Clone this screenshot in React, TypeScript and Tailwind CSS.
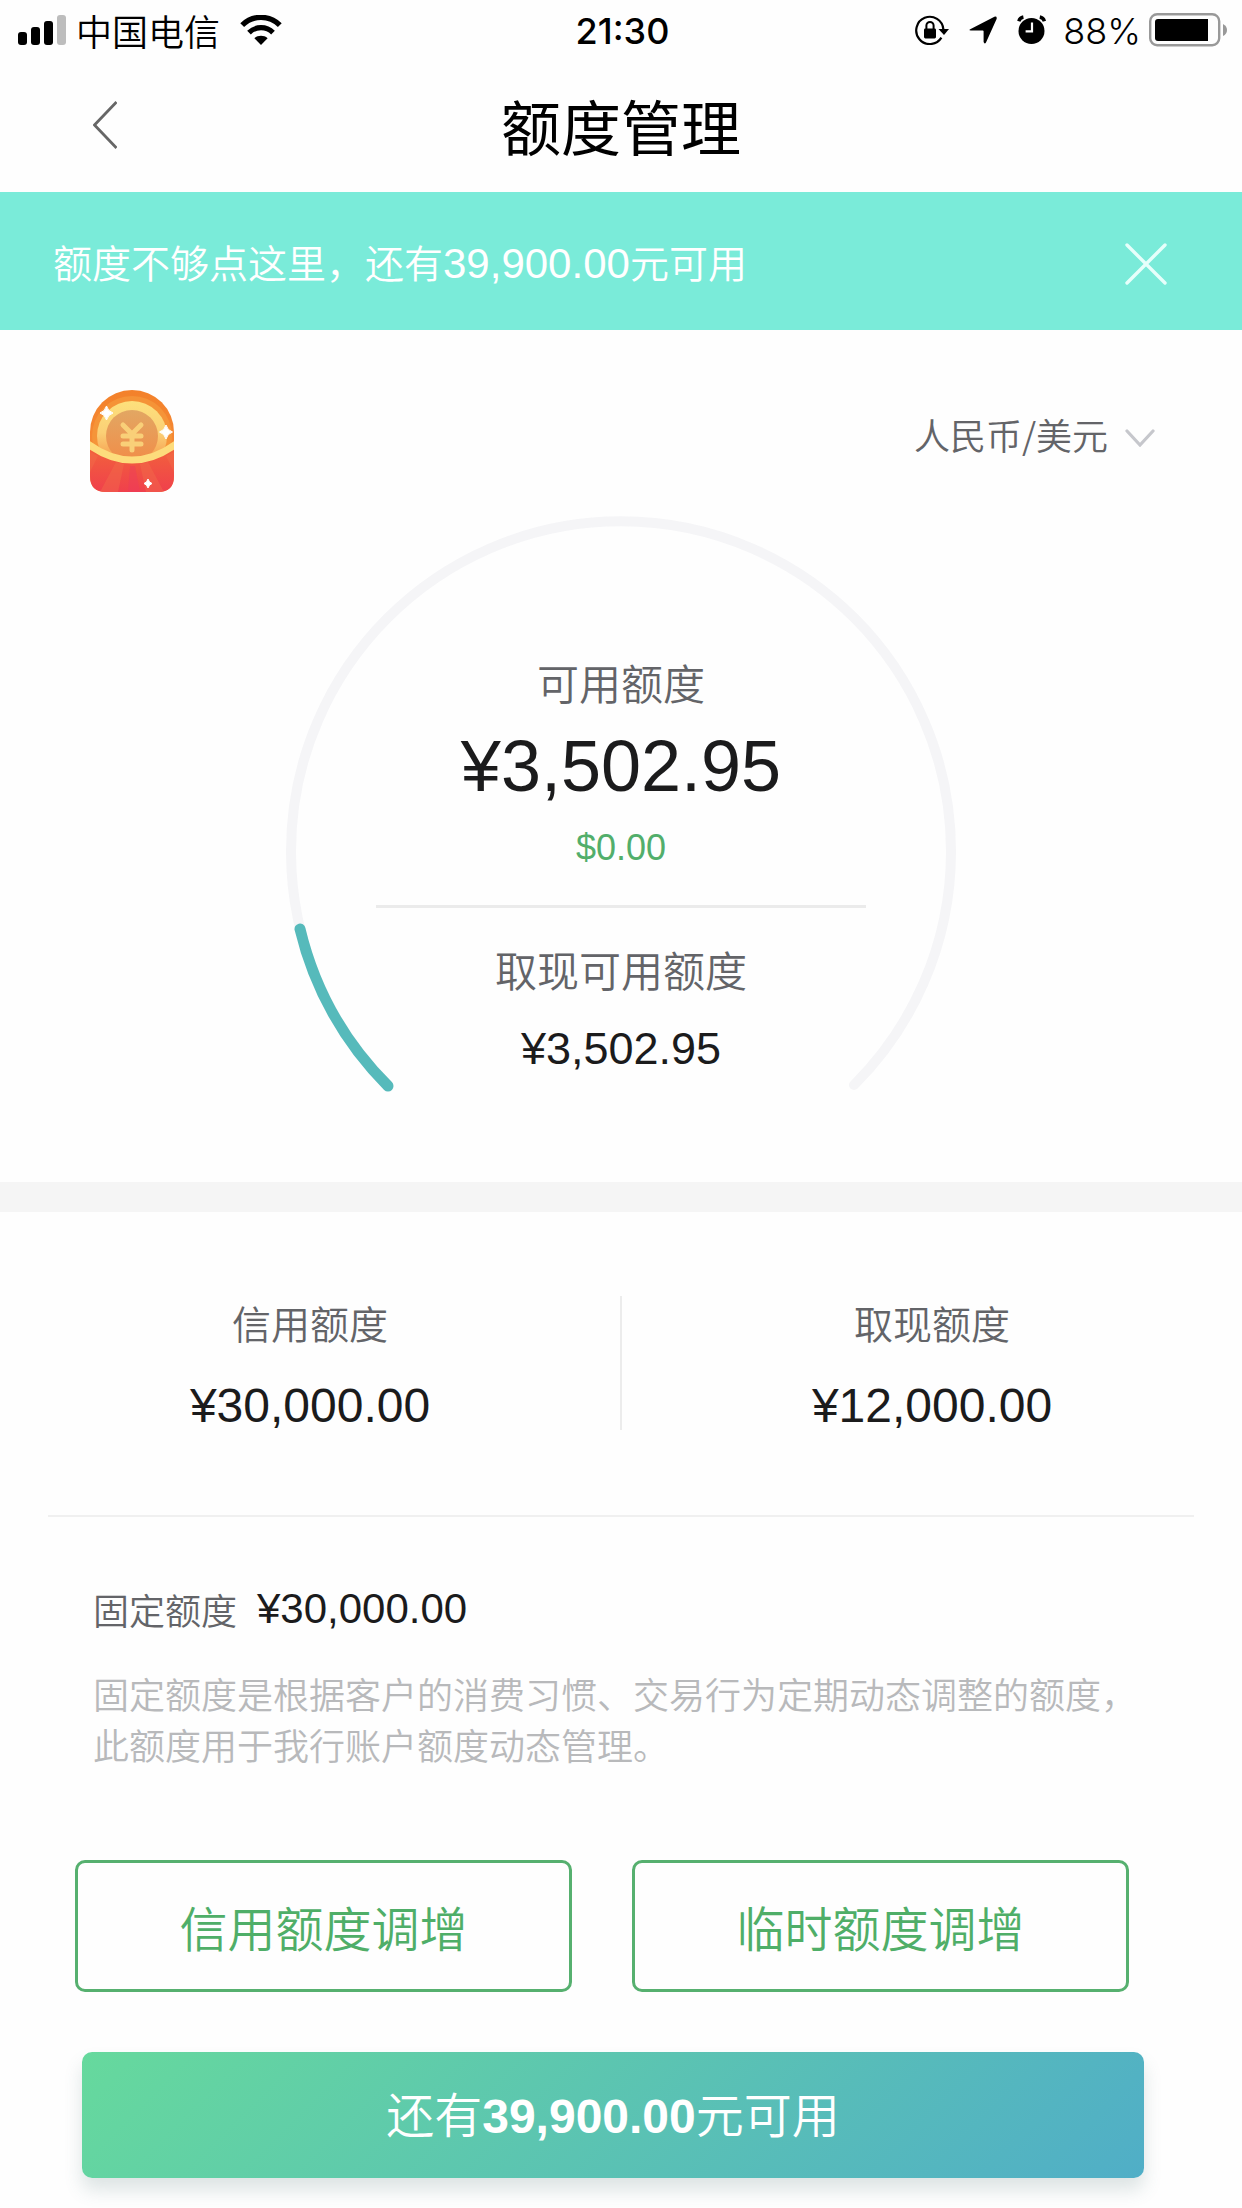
import React from "react";

function SignalIcon() {
  return (
    <svg width="48" height="30" viewBox="0 0 48 30" aria-hidden="true">
      <rect x="0" y="17" width="9" height="13" rx="3" fill="#000" />
      <rect x="13" y="12" width="9" height="18" rx="3" fill="#000" />
      <rect x="26" y="6" width="9" height="24" rx="3" fill="#000" />
      <rect x="39" y="0" width="9" height="30" rx="3" fill="#bdbdbd" />
    </svg>
  );
}

function WifiIcon() {
  return (
    <svg width="42" height="30" viewBox="0 0 42 30" fill="none" aria-hidden="true">
      <path d="M2.2 10.2C12.6 -0.2 29.4 -0.2 39.8 10.2" stroke="#000" strokeWidth="5.4" />
      <path d="M9 17.6C15.6 11 26.4 11 33 17.6" stroke="#000" strokeWidth="5.2" />
      <path d="M14.4 23.2C18 20 24 20 27.6 23.2L21 30Z" fill="#000" />
    </svg>
  );
}

function RotationLockIcon() {
  return (
    <svg width="34" height="30" viewBox="0 0 34 30" fill="none" aria-hidden="true">
      <path d="M26.4 22.6A13.6 13.6 0 1 1 28.4 14.5" stroke="#000" strokeWidth="2.2" />
      <path d="M23.500 14H34L29 20Z" fill="#000" />
      <rect x="9" y="13.4" width="12" height="10" rx="1.4" fill="#000" />
      <path d="M11.4 14V10.6a3.6 3.6 0 0 1 7.2 0V14" stroke="#000" strokeWidth="2" />
    </svg>
  );
}

function LocationIcon() {
  return (
    <svg width="28" height="28" viewBox="0 0 28 28" aria-hidden="true">
      <path
        d="M1.2 13.2L25.4 0.7Q28.3 0 27.6 3L17 26.4Q15.6 28.6 14.6 26V15.2Q14.5 14.6 13.8 14.6H1.8Q-0.8 14.4 1.2 13.2Z"
        fill="#000"
      />
    </svg>
  );
}

function AlarmIcon() {
  return (
    <svg width="30" height="30" viewBox="0 0 30 30" fill="none" aria-hidden="true">
      <circle cx="14.5" cy="16" r="13" fill="#000" />
      <path d="M1.8 6.2A6 6 0 0 1 6.4 2M22.8 2A6 6 0 0 1 27.4 6.2" stroke="#000" strokeWidth="3.4" />
      <path d="M15 7.4V16.4H8.6" stroke="#fff" strokeWidth="2.2" />
    </svg>
  );
}

function BatteryIcon() {
  return (
    <svg width="78" height="34" viewBox="0 0 78 34" aria-hidden="true">
      <rect x="1.2" y="1.2" width="69" height="31" rx="7" fill="none" stroke="#999" strokeWidth="2.4" />
      <path d="M74 11Q78 13 78 17T74 23Z" fill="#999" />
      <path d="M9 6H59V28H9Q6 28 6 25V9Q6 6 9 6Z" fill="#000" />
    </svg>
  );
}

function CoinIcon() {
  return (
    <svg width="84" height="102" viewBox="0 0 84 102" aria-hidden="true">
      <defs>
        <clipPath id="pouch">
          <path d="M0 42A42 42 0 0 1 84 42V86Q84 102 68 102H16Q0 102 0 86Z" />
        </clipPath>
        <linearGradient id="top" x1="0" y1="0" x2="0" y2="1">
          <stop offset="0" stopColor="#f3812a" />
          <stop offset="1" stopColor="#f7903f" />
        </linearGradient>
        <linearGradient id="coin" x1="0" y1="0" x2="0" y2="1">
          <stop offset="0" stopColor="#e2a763" />
          <stop offset="1" stopColor="#f18d48" />
        </linearGradient>
        <linearGradient id="ring" x1="0" y1="0" x2="0" y2="1">
          <stop offset="0" stopColor="#fde07c" />
          <stop offset="0.45" stopColor="#fbd076" />
          <stop offset="0.85" stopColor="#f59a4c" />
        </linearGradient>
        <linearGradient id="pocket" x1="0" y1="0" x2="0" y2="1">
          <stop offset="0" stopColor="#f2653a" />
          <stop offset="1" stopColor="#f0404c" />
        </linearGradient>
      </defs>
      <g clipPath="url(#pouch)">
        <rect width="84" height="102" fill="url(#top)" />
        <circle cx="42" cy="46" r="40" fill="#f59a3c" opacity="0.7" />
        <circle cx="42" cy="46" r="35" fill="url(#ring)" />
        <circle cx="42" cy="46" r="26" fill="url(#coin)" />
        <path
          d="M33 35L42 44L51 35M33 46H51M33 54H51M42 45V60"
          stroke="#f9cf78"
          strokeWidth="5"
          strokeLinecap="round"
          strokeLinejoin="round"
          fill="none"
        />
        <path d="M0 54Q42 86 84 54V102H0Z" fill="url(#pocket)" />
        <path d="M26 72L34 74L28 102H10ZM50 74L58 72L74 102H56Z" fill="#f3704a" opacity="0.4" />
        <path d="M0 62L8 66L0 82ZM84 62L76 66L84 82Z" fill="#f3704a" opacity="0.4" />
        <path d="M38 102L40 76H45L50 102Z" fill="#ee3a60" opacity="0.4" />
        <path d="M-2 54Q42 86 86 54" stroke="#fddc7c" strokeWidth="7" fill="none" />
      </g>
      <g fill="#fff" stroke="#fff">
        <path d="M16.500 16Q18 21.500 23 23Q18 24.500 16.500 30Q15 24.500 10 23Q15 21.500 16.500 16Z" />
        <path d="M76 35Q77.500 40.500 82.500 42Q77.500 43.500 76 49Q74.500 43.500 69.500 42Q74.500 40.500 76 35Z" />
        <path d="M58 89Q59 92.500 62 93.500Q59 94.500 58 98Q57 94.500 54 93.500Q57 92.500 58 89Z" />
      </g>
    </svg>
  );
}

function StatusBar() {
  return (
    <div className="grid h-[60px] grid-cols-[1fr_auto_1fr] items-center pr-[15px] pl-[18px] text-black">
      <div className="flex items-center">
        <SignalIcon />
        <span className="mr-5 ml-2.5 font-['Noto_Sans_CJK_SC',sans-serif] text-[36px] leading-[48px]">
          中国电信
        </span>
        <WifiIcon />
      </div>
      <time className="pt-0.5 font-['Inter',sans-serif] text-[36px] leading-[48px] font-medium">21:30</time>
      <div className="flex items-center justify-end">
        <RotationLockIcon />
        <span className="mr-5 ml-5">
          <LocationIcon />
        </span>
        <AlarmIcon />
        <span className="mr-2 ml-4 pt-0.5 font-['Inter',sans-serif] text-[36px] leading-[48px] font-light">
          88%
        </span>
        <BatteryIcon />
      </div>
    </div>
  );
}

function Gauge() {
  return (
    <div className="mt-6 grid justify-items-center">
      <svg
        className="col-start-1 row-start-1"
        width="670"
        height="600"
        viewBox="0 0 670 600"
        fill="none"
        strokeLinecap="round"
        aria-hidden="true"
      >
        <path d="M102 569A330 330 0 1 1 568 569" stroke="#f5f5f7" strokeWidth="10" />
        <path d="M102 570A330 330 0 0 1 14 413" stroke="#56babb" strokeWidth="11" />
      </svg>
      <div className="col-start-1 row-start-1 flex w-[490px] flex-col items-center pt-[140px]">
        <h2 className="text-[42px] leading-[60px] text-[#636468]">可用额度</h2>
        <p className="mt-2 text-[72px] leading-[84px] text-[#1b1b1c]">¥3,502.95</p>
        <p className="mt-4 text-[36px] leading-[48px] text-[#52ae6b]">$0.00</p>
        <hr className="mt-[33px] w-full border-t-3 border-[#ebebeb]" />
        <h2 className="mt-[35px] text-[42px] leading-[60px] text-[#636468]">取现可用额度</h2>
        <p className="mt-4 text-[45px] leading-[60px] text-[#1b1b1c]">¥3,502.95</p>
      </div>
    </div>
  );
}

function Limit({ label, amount }: { label: string; amount: string }) {
  return (
    <div className="flex flex-1 flex-col items-center gap-7 pt-0.5">
      <dt className="text-[39px] leading-[56px] text-[#636468]">{label}</dt>
      <dd className="text-[48px] leading-[48px] text-[#1b1b1c]">{amount}</dd>
    </div>
  );
}

function OutlineButton({ children }: { children: React.ReactNode }) {
  return (
    <button
      type="button"
      className="h-[132px] flex-1 rounded-[10px] border-3 border-[#56b06f] font-['Noto_Sans_CJK_SC',sans-serif] text-[48px] leading-[60px] text-[#4fae68]"
    >
      {children}
    </button>
  );
}

export default function App() {
  return (
    <div className="min-h-screen bg-[#fefefe] pb-[30px] font-['Liberation_Sans','Noto_Sans_CJK_SC',sans-serif] font-[350]">
      <StatusBar />
      <header className="grid h-[130px] grid-cols-[1fr_auto_1fr] items-center px-[93px]">
        <button type="button" aria-label="返回" className="justify-self-start">
          <svg width="24" height="48" viewBox="0 0 24 48" fill="none" aria-hidden="true">
            <path d="M23.500 1L1.500 24L23.500 47" stroke="#666" strokeWidth="2.800" />
          </svg>
        </button>
        <h1 className="font-['Noto_Sans_CJK_SC',sans-serif] text-[60px] leading-[72px] font-normal text-black">
          额度管理
        </h1>
      </header>

      <div className="mt-0.5 flex h-[138px] items-center justify-between bg-[#7aebd9] pt-1.5 pr-[75px] pl-[53px] text-white">
        <a href="#increase" className="text-[39px] leading-[54px]">
          额度不够点这里，还有<span className="text-[42px]">39,900.00</span>元可用
        </a>
        <button type="button" aria-label="关闭">
          <svg width="42" height="42" viewBox="0 0 42 42" fill="none" aria-hidden="true">
            <path d="M2 2L40 40M40 2L2 40" stroke="#e6fffb" strokeWidth="3.400" strokeLinecap="round" />
          </svg>
        </button>
      </div>

      <main>
        <section className="pt-[60px] pb-[66px]">
          <div className="flex justify-between pr-[87px] pl-[90px]">
            <CoinIcon />
            <label className="flex items-center gap-4 self-start pt-5">
              <select
                aria-label="币种"
                className="appearance-none bg-transparent font-['Noto_Sans_CJK_SC',sans-serif] text-[36px] leading-[48px] text-[#636468]"
              >
                <option>人民币/美元</option>
              </select>
              <svg className="mt-2" width="30" height="18" viewBox="0 0 30 18" fill="none" aria-hidden="true">
                <path d="M2 2L15 16L28 2" stroke="#c6c7cc" strokeWidth="3.200" strokeLinecap="round" />
              </svg>
            </label>
          </div>
          <Gauge />
        </section>

        <div className="h-[30px] bg-[#f5f5f5]" />

        <dl className="flex pt-[84px] pb-[85px]">
          <Limit label="信用额度" amount="¥30,000.00" />
          <div className="w-0.5 bg-[#ececec]" />
          <Limit label="取现额度" amount="¥12,000.00" />
        </dl>
        <hr className="mx-12 border-t-2 border-[#f0f0f0]" />

        <section className="px-[93px] pt-[62px]">
          <div className="flex items-center gap-5 leading-[60px]">
            <h2 className="font-['Noto_Sans_CJK_SC',sans-serif] text-[36px] text-[#636468]">固定额度</h2>
            <p className="text-[42px] text-[#1b1b1c]">¥30,000.00</p>
          </div>
          <p className="mt-8 text-[36px] leading-[51px] text-[#b8b9bb]">
            固定额度是根据客户的消费习惯、交易行为定期动态调整的额度，此额度用于我行账户额度动态管理。
          </p>
        </section>

        <div className="mt-[87px] flex gap-[60px] pr-[113px] pl-[75px]">
          <OutlineButton>信用额度调增</OutlineButton>
          <OutlineButton>临时额度调增</OutlineButton>
        </div>
        <div className="mt-[60px] pr-[98px] pl-[82px]">
          <button
            type="button"
            className="h-[126px] w-full rounded-[10px] bg-linear-[135deg] from-[#66d99d] to-[#50aec7] pt-1 text-[48px] leading-[60px] text-white shadow-[0_12px_18px_rgba(70,110,110,0.18)]"
          >
            还有<strong className="font-bold">39,900.00</strong>元可用
          </button>
        </div>
      </main>
    </div>
  );
}
